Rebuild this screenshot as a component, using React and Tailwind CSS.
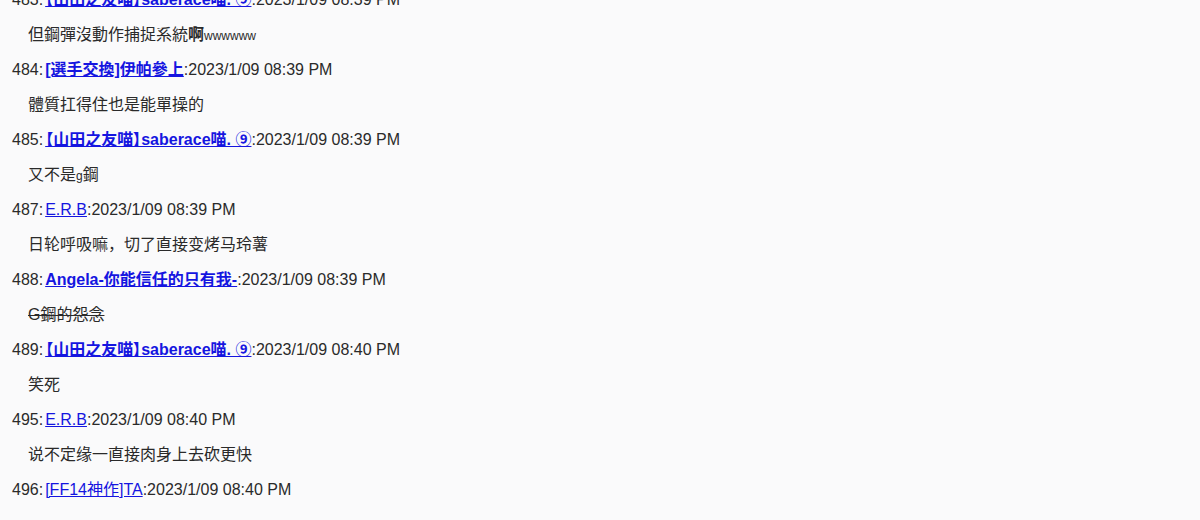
import React from "react";

const posts = [
  { no: 483, name: "【山田之友喵】saberace喵. ⑨", bold: true, time: "2023/1/09 08:39 PM", body: <>但鋼彈沒動作捕捉系統<b>啊</b><span className="text-[12px]">wwwwww</span></> },
  { no: 484, name: "[選手交換]伊帕參上", bold: true, time: "2023/1/09 08:39 PM", body: "體質扛得住也是能單操的" },
  { no: 485, name: "【山田之友喵】saberace喵. ⑨", bold: true, time: "2023/1/09 08:39 PM", body: <>又不是<span className="text-[12px]">g</span>鋼</> },
  { no: 487, name: "E.R.B", bold: false, time: "2023/1/09 08:39 PM", body: "日轮呼吸嘛，切了直接变烤马玲薯" },
  { no: 488, name: "Angela-你能信任的只有我-", bold: true, time: "2023/1/09 08:39 PM", body: <s>G鋼的怨念</s> },
  { no: 489, name: "【山田之友喵】saberace喵. ⑨", bold: true, time: "2023/1/09 08:40 PM", body: "笑死" },
  { no: 495, name: "E.R.B", bold: false, time: "2023/1/09 08:40 PM", body: "说不定缘一直接肉身上去砍更快" },
  { no: 496, name: "[FF14神作]TA", bold: false, time: "2023/1/09 08:40 PM", body: null },
];

export default function App() {
  return (
    <div className="min-h-screen w-full overflow-hidden bg-[#fafafb] text-[#2a2a2a] text-[16px] leading-[35px] font-['Liberation_Sans','Noto_Sans_CJK_JP',sans-serif]">
      <div className="-mt-[18px]">
        {posts.map((p) => (
          <div key={p.no}>
            <div className="h-[35px] whitespace-nowrap pl-3">
              {p.no}:
              <a
                href="#"
                className={"ml-[2px] text-[#1515e0] underline " + (p.bold ? "font-bold [font-feature-settings:'palt'] " : "")}
              >
                {p.name}
              </a>
              :{p.time}
            </div>
            {p.body && <div className="h-[35px] whitespace-nowrap pl-7">{p.body}</div>}
          </div>
        ))}
      </div>
    </div>
  );
}
